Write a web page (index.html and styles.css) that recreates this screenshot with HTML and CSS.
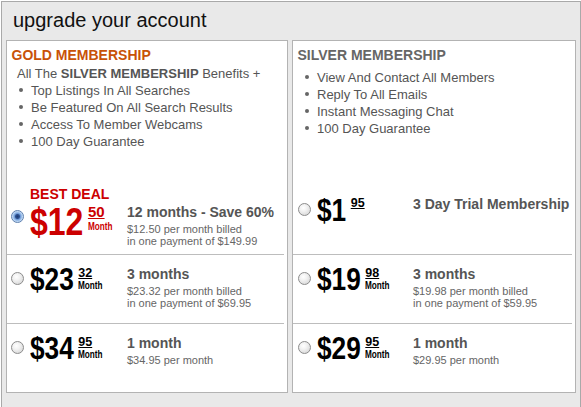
FILE: index.html
```html
<!DOCTYPE html>
<html>
<head>
<meta charset="utf-8">
<title>upgrade your account</title>
<link rel="stylesheet" href="styles.css">
</head>
<body>
<div class="page">
  <h1 class="heading">upgrade your account</h1>
  <div class="plans">
    <section class="plan plan-gold">
      <div class="plan-info">
        <h2 class="plan-title gold-title">GOLD MEMBERSHIP</h2>
        <p class="intro">All The <b>SILVER MEMBERSHIP</b> Benefits +</p>
        <ul class="benefits">
          <li>Top Listings In All Searches</li>
          <li>Be Featured On All Search Results</li>
          <li>Access To Member Webcams</li>
          <li>100 Day Guarantee</li>
        </ul>
      </div>
      <div class="option option-best">
        <div class="pick">
          <span class="radio checked"></span>
          <div class="price-col">
            <div class="best-deal">BEST DEAL</div>
            <div class="price price-lg">
              <span class="dollars">$12</span>
              <span class="cents-col"><span class="cents">50</span><span class="month">Month</span></span>
            </div>
          </div>
        </div>
        <div class="desc">
          <div class="desc-title">12 months - Save 60%</div>
          <div class="desc-line">$12.50 per month billed</div>
          <div class="desc-line">in one payment of $149.99</div>
        </div>
      </div>
      <div class="option">
        <div class="pick">
          <span class="radio"></span>
          <div class="price">
            <span class="dollars">$23</span>
            <span class="cents-col"><span class="cents">32</span><span class="month">Month</span></span>
          </div>
        </div>
        <div class="desc">
          <div class="desc-title">3 months</div>
          <div class="desc-line">$23.32 per month billed</div>
          <div class="desc-line">in one payment of $69.95</div>
        </div>
      </div>
      <div class="option">
        <div class="pick">
          <span class="radio"></span>
          <div class="price">
            <span class="dollars">$34</span>
            <span class="cents-col"><span class="cents">95</span><span class="month">Month</span></span>
          </div>
        </div>
        <div class="desc">
          <div class="desc-title">1 month</div>
          <div class="desc-line">$34.95 per month</div>
        </div>
      </div>
    </section>
    <section class="plan plan-silver">
      <div class="plan-info">
        <h2 class="plan-title silver-title">SILVER MEMBERSHIP</h2>
        <ul class="benefits">
          <li>View And Contact All Members</li>
          <li>Reply To All Emails</li>
          <li>Instant Messaging Chat</li>
          <li>100 Day Guarantee</li>
        </ul>
      </div>
      <div class="option option-trial">
        <div class="pick">
          <span class="radio"></span>
          <div class="price">
            <span class="dollars dollars-short">$1</span>
            <span class="cents-col"><span class="cents">95</span></span>
          </div>
        </div>
        <div class="desc">
          <div class="desc-title">3 Day Trial Membership</div>
        </div>
      </div>
      <div class="option">
        <div class="pick">
          <span class="radio"></span>
          <div class="price">
            <span class="dollars">$19</span>
            <span class="cents-col"><span class="cents">98</span><span class="month">Month</span></span>
          </div>
        </div>
        <div class="desc">
          <div class="desc-title">3 months</div>
          <div class="desc-line">$19.98 per month billed</div>
          <div class="desc-line">in one payment of $59.95</div>
        </div>
      </div>
      <div class="option">
        <div class="pick">
          <span class="radio"></span>
          <div class="price">
            <span class="dollars">$29</span>
            <span class="cents-col"><span class="cents">95</span><span class="month">Month</span></span>
          </div>
        </div>
        <div class="desc">
          <div class="desc-title">1 month</div>
          <div class="desc-line">$29.95 per month</div>
        </div>
      </div>
    </section>
  </div>
</div>
</body>
</html>
```
FILE: styles.css
```css
html, body {
  margin: 0;
  padding: 0;
  overflow: hidden;
  background: #fff;
}
body {
  font-family: "Liberation Sans", Arial, sans-serif;
}
.page {
  margin: 1px 0 0 1px;
  width: 580px;
  height: 420px;
  box-sizing: border-box;
  border: 1px solid #a9a9a9;
  background: #e9e9e9;
  padding: 0 4px;
}
.heading {
  margin: 0;
  height: 38px;
  box-sizing: border-box;
  padding: 6px 0 0 7px;
  font-size: 20px;
  line-height: 24px;
  font-weight: normal;
  color: #111;
}
.plans {
  display: flex;
  gap: 4px;
}
.plan {
  box-sizing: border-box;
  height: 353px;
  border: 1px solid #b3b3b3;
  background: #fff;
}
.plan-gold { width: 282px; }
.plan-silver { width: 284px; }
.plan-info {
  height: 144px;
  box-sizing: border-box;
  padding-top: 5.5px;
}
.plan-title {
  margin: 0;
  padding-left: 4.5px;
  font-size: 14px;
  line-height: 16px;
  font-weight: bold;
}
.gold-title { color: #c85208; }
.silver-title { color: #666; }
.intro {
  margin: 2px 0 0 10px;
  font-size: 13px;
  line-height: 17px;
  color: #555;
}
.benefits {
  list-style: none;
  margin: 0;
  padding: 0 0 0 12px;
  font-size: 13px;
  line-height: 17px;
  color: #555;
}
.plan-silver .benefits { margin-top: 6px; }
.benefits li {
  display: flex;
  align-items: center;
  gap: 8px;
}
.benefits li::before {
  content: "";
  width: 4px;
  height: 4px;
  border-radius: 50%;
  background: #666;
  flex: none;
}
.option {
  display: flex;
  align-items: flex-start;
  height: 69px;
  box-sizing: border-box;
  margin-right: 3px;
  white-space: nowrap;
}
.option + .option { border-top: 1px solid #bdbdbd; }
.pick {
  width: 120px;
  flex: none;
  display: flex;
  align-items: flex-start;
}
.plan-silver .pick { padding-left: 1px; box-sizing: border-box; }
.radio {
  flex: none;
  width: 13px;
  height: 13px;
  box-sizing: border-box;
  border-radius: 50%;
  border: 1px solid #8c8c8c;
  background: radial-gradient(circle at 40% 35%, #ffffff 0%, #f2f2f2 35%, #cfcfcf 100%);
  margin: 16.5px 0 0 4px;
}
.radio.checked {
  border-color: #5d7fae;
  background: radial-gradient(circle at 50% 50%, #1d3a72 0, #2b4f8f 2px, #6f9ad6 3px, #a9c9ef 4.5px, #dfeaf8 6px);
}
.price {
  display: flex;
  align-items: flex-start;
  margin-left: 6px;
}
.price-col {
  margin-left: 6px;
  padding-top: 2px;
}
.price-col .price { margin-left: 0; }
.dollars {
  display: inline-block;
  font-weight: bold;
  font-size: 32px;
  line-height: 32px;
  margin-top: 7.5px;
  margin-right: -0.3em;
  transform: scaleX(0.82);
  transform-origin: 0 0;
  color: #000;
}
.dollars-short { margin-right: -0.2em; }
.cents-col {
  display: flex;
  flex-direction: column;
  align-items: flex-start;
  margin: 11.5px 0 0 4.5px;
  color: #000;
}
.cents {
  font-size: 12.5px;
  line-height: 13px;
  font-weight: bold;
  text-decoration: underline;
}
.month {
  display: inline-block;
  font-size: 10px;
  line-height: 10px;
  font-weight: bold;
  margin-top: 1px;
  transform: scaleX(0.82);
  transform-origin: 0 0;
}
.best-deal {
  font-size: 14px;
  line-height: 15px;
  font-weight: bold;
  color: #cc0000;
}
.option-best .radio { margin-top: 25px; }
.price-lg .dollars {
  font-size: 39px;
  line-height: 39px;
  margin-top: 0;
  color: #cc0000;
}
.price-lg .cents-col {
  margin-top: 1.5px;
  color: #cc0000;
}
.price-lg .cents {
  font-size: 15px;
  line-height: 16px;
}
.price-lg .month { margin-top: 2px; }
.option-trial .radio { margin-top: 18px; }
.option-trial .dollars { margin-top: 9px; }
.desc {
  margin-top: 10.5px;
}
.option-best .desc { margin-top: 19px; }
.desc-title {
  font-size: 14px;
  line-height: 17px;
  font-weight: bold;
  color: #555;
}
.desc-line {
  font-size: 11px;
  line-height: 12px;
  color: #666;
}
.desc-title + .desc-line { margin-top: 2px; }
```
